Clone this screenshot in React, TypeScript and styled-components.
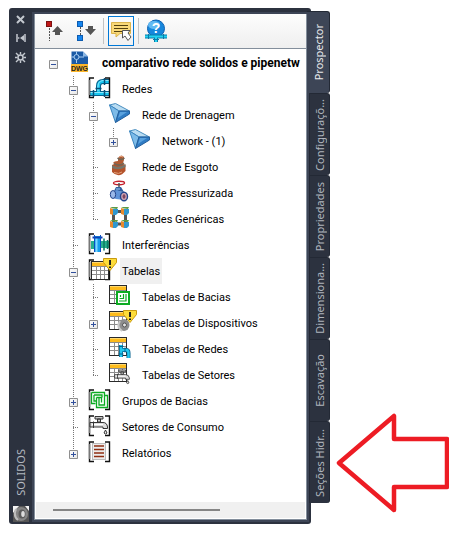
import React from "react";
import styled, { createGlobalStyle, css } from "styled-components";

const GlobalStyle = createGlobalStyle`
  *, *::before, *::after { box-sizing: border-box; }
  body { margin: 0; background: #fff; }
  button { font: inherit; border: 0; padding: 0; background: none; cursor: pointer; }
`;

const dark = "#2c323f";
const slate = "#3d4556";
const edge = "#838e9b";
const uiFont = `"Noto Sans", "Open Sans", sans-serif`;
const treeFont = `Roboto, "Liberation Sans", sans-serif`;

const Page = styled.main`
  display: flex;
  align-items: flex-start;
  min-height: 100vh;
  padding: 8px 12px 15px 9px;
`;

const Palette = styled.section`
  display: flex;
  align-self: stretch;
  flex: 1;
  min-width: 0;
  padding: 4px 2px 2px 0;
  background: ${dark};
  border-radius: 3px;
`;

const TitleBar = styled.header`
  display: flex;
  flex-direction: column;
  align-items: center;
  width: 23px;
  gap: 5px;
  color: #c3c8cf;
`;

const BarButton = styled.button`
  display: grid;
  place-items: center;
  width: 16px;
  height: 14px;
  color: inherit;
`;

const Title = styled.h1`
  margin: auto 0 5px;
  font: 400 11px/16px ${uiFont};
  color: #b3b8c0;
  writing-mode: vertical-rl;
  transform: rotate(180deg);
`;

const Frame = styled.div`
  display: flex;
  flex: 1;
  min-width: 0;
  background: ${slate};
  padding: 2px;
`;

const Content = styled.div`
  display: flex;
  flex-direction: column;
  flex: 1;
  min-width: 0;
  background: #fff;
  border: solid ${edge};
  border-width: 0 1px 1px;
`;

const Toolbar = styled.div`
  display: flex;
  align-items: center;
  gap: 4px;
  padding: 2px 6px;
  border-bottom: 1px solid ${edge};
  background: linear-gradient(#fdfdfd, #efefef);
`;

const ToolGroup = styled.div`
  display: flex;
  gap: 6px;
`;

const ToolButton = styled.button<{ $pressed?: boolean }>`
  display: grid;
  place-items: center;
  width: 26px;
  height: 30px;
  ${(p) => p.$pressed && css`box-shadow: inset 0 0 0 1px #0078d7;`}
`;

const Separator = styled.span`
  width: 1px;
  height: 26px;
  background: #c3c3c3;
`;

const Tree = styled.ul`
  flex: 1;
  margin: 0;
  padding: 1px 0 0 8px;
  overflow: hidden;
  list-style: none;
  font: 400 11px/26px ${treeFont};
  color: #000;
`;

const Row = styled.li`
  display: flex;
  height: 26px;
  white-space: nowrap;
`;

type Line = "none" | "full" | "upper";

const dots = "repeating-linear-gradient(#777 0 1px, transparent 1px 2px)";
const dotsAcross = "repeating-linear-gradient(90deg, #777 0 1px, transparent 1px 2px)";

const Guide = styled.span<{ $line: Line; $stub?: boolean }>`
  display: flex;
  flex: none;
  width: 20px;
  height: 26px;
  padding: 10px 0 0 6px;
  background-image: ${(p) => (p.$line === "none" ? "none" : dots)}, ${(p) => (p.$stub ? dotsAcross : "none")};
  background-size: 1px ${(p) => (p.$line === "upper" ? "14px" : "26px")}, 6px 1px;
  background-position: 10px 0, 10px 13px;
  background-repeat: no-repeat;
`;

const Expander = styled.button`
  display: block;
  width: 9px;
  height: 9px;
  border-radius: 1px;
  background: linear-gradient(135deg, #fff, #e4e4e4);
  box-shadow: inset 0 0 0 1px #8f8f8f;
  svg { display: block; }
`;

const IconSvg = styled.svg`
  flex: none;
  width: 30px;
  height: 26px;
  margin: 0 3px 0 4px;
`;

const Label = styled.span<{ $bold?: boolean; $selected?: boolean }>`
  padding: 1px 2px 0;
  ${(p) => p.$bold && css`font-size: 12px; font-weight: 700; padding-top: 0;`}
  ${(p) => p.$selected && css`background: #f0f0f0;`}
`;

const ScrollTrack = styled.div`
  display: flex;
  align-items: center;
  height: 16px;
  margin: 0 1px 1px;
  padding: 0 17px;
  background: #f0f0f0;
`;

const ScrollThumb = styled.div`
  width: 71%;
  height: 2px;
  background: #858585;
`;

const Tabs = styled.nav`
  display: flex;
  flex: none;
  flex-direction: column;
  width: 21px;
  margin: 3px 0 0 -2px;
`;

const Tab = styled.button<{ $active?: boolean }>`
  display: grid;
  place-items: center;
  height: 82px;
  margin-left: ${(p) => (p.$active ? "-2px" : "0")};
  padding-left: ${(p) => (p.$active ? "2px" : "0")};
  border: solid #232935;
  border-width: ${(p) => (p.$active ? "1px 1px 0 0" : "1px 1px 0 1px")};
  border-radius: 0 3px 3px 0;
  background: ${(p) => (p.$active ? slate : dark)};
  color: ${(p) => (p.$active ? "#e8eaed" : "#b0b5bd")};
`;

const TabText = styled.span`
  font: 400 11px/16px ${uiFont};
  white-space: nowrap;
  writing-mode: vertical-rl;
  transform: rotate(180deg);
`;

const Arrow = styled.svg`
  flex: none;
  width: 114px;
  height: 102px;
  margin: 404px 0 0 5px;
`;

const Brackets = () => (
  <>
    <path d="M7 2H2.500V21.500H7" fill="none" stroke="#111" strokeWidth="1.4" />
    <path d="M2.500 4V19" stroke="#777" strokeWidth="1.4" />
    <path d="M18 2H22.500V21.500H18" fill="none" stroke="#111" strokeWidth="1.4" />
  </>
);

const Grid = () => (
  <g>
    <rect x="2.500" y="1.500" width="17" height="18" fill="#fff" stroke="#2a2a2a" />
    <rect x="3" y="2" width="16" height="4" fill="#fdbb1c" />
    <path d="M3 2.500H19" stroke="#ffd970" />
    <path d="M3 6.500H19M3 10.500H19M3 14.500H19M7.500 7V19M11.500 7V19M15.500 7V19" stroke="#8c8c8c" />
  </g>
);

const Warning = () => (
  <g>
    <path d="M16.500 .500H29.500V4.500L23 12.500L16.500 4.500Z" fill="#fddc3a" stroke="#c99a10" />
    <path d="M23 2V7M23 8.500V10" stroke="#222" strokeWidth="2" />
  </g>
);

const Solid = () => (
  <g strokeLinejoin="round">
    <path d="M2.500 3L8.500 1.500L22.500 9L12 9Z" fill="#b9dcf2" stroke="#4a8fc0" />
    <path d="M2.500 3L12 9L8.500 20.500Z" fill="#7dbbe8" stroke="#3c86c0" />
    <path d="M12 9H22.500V12L8.500 20.500Z" fill="#2f7cc4" stroke="#245f9c" />
    <path d="M13 10L20 10L11 16Z" fill="#5aa2de" />
  </g>
);

const Basins = () => (
  <g fill="none" stroke="#0cab22" strokeWidth="1.300">
    <path d="M3.500 3.500H16.500V6.500M3.500 3.500V14.500H7.500M6 6H14V8.500M6 6V12H8" />
    <path d="M8.500 8.500V18.500H19.500V6.500H16.500V16H11V8.500M8.500 8.500H13.500V13.500" />
  </g>
);

const Tap = () => (
  <g stroke="#333" strokeWidth="1">
    <path d="M8 2.500H16V5H8ZM10.500 5H13.500V8H10.500Z" fill="#ccc" />
    <path d="M3 8.500H16Q20 8.500 20.500 13V14.500H16V13H3Z" fill="#ddd" />
    <path d="M5 10.500H16" stroke="#fff" />
    <path d="M6.500 7.500V14" />
    <path d="M18.500 16L17 19Q18.500 21 20 19Z" fill="#eee" />
  </g>
);

const icons: Record<string, React.ReactNode> = {
  dwg: (
    <g>
      <path d="M4.500 1.500H16L21 6.500V21H4.500Z" fill="#1c5ba6" />
      <path d="M16 1.500L21 6.500H16Z" fill="#8db8e4" />
      <circle cx="9.500" cy="7" r="2.500" fill="none" stroke="#a9cdf0" />
      <path d="M9.500 1.500V4.500M9.500 9.500V13M4.500 7H7M12 7H17" stroke="#a9cdf0" />
      <rect x="4" y="14" width="17" height="8" fill="#fbb62b" />
      <text x="12.500" y="20.500" fontSize="7" fontWeight="700" fontFamily="Liberation Sans, sans-serif" textAnchor="middle" fill="#222">DWG</text>
    </g>
  ),
  pipes: (
    <g>
      <path d="M2 17.500H23" stroke="#075f88" strokeWidth="5" />
      <path d="M11.500 16V10Q11.500 5.500 16 5.500H23" fill="none" stroke="#075f88" strokeWidth="5" />
      <path d="M2 17.500H23" stroke="#18c5ef" strokeWidth="3" />
      <path d="M11.500 17V10Q11.500 5.500 16 5.500H23" fill="none" stroke="#18c5ef" strokeWidth="3" />
      <path d="M3 16.500H22M11 15V10Q11 5 16 4.500H22" fill="none" stroke="#8beaff" />
      <path d="M8.500 12.500H14.500M17.500 2V9M6.500 14V21M17.500 14V21" stroke="#064f78" strokeWidth="1.500" />
      <Brackets />
    </g>
  ),
  solid: <Solid />,
  sewer: (
    <g>
      <path d="M5 17V11Q12 7 18.500 11V17Q12 25 5 18Z" fill="#b4532b" />
      <path d="M5 11Q11 15 18.500 10V13Q12 17 5 14Z" fill="#77756a" />
      <path d="M6 9Q7 7 11 7L11 4Q14 -.500 17 3L17 6L16 9Q12 13 6 9Z" fill="#b05b34" />
      <path d="M7 9.500Q12 13 17 9M10.500 4Q14 7 17.500 4" fill="none" stroke="#6c6658" strokeWidth="1.500" />
      <path d="M7 18.500Q12 20.500 15 18M12 3Q14 1.500 16 3" fill="none" stroke="#e2a27c" />
    </g>
  ),
  valve: (
    <g>
      <ellipse cx="12" cy="3" rx="5.500" ry="1.700" fill="none" stroke="#c4202c" strokeWidth="1.400" />
      <path d="M12 3V8" stroke="#555" strokeWidth="1.500" />
      <path d="M7 11L9 7H14L17 12Z" fill="#315f9e" />
      <path d="M4 12L10 10L19 14L17 20L9 19L4 17Z" fill="#5f93d8" />
      <ellipse cx="6" cy="14.500" rx="2.700" ry="4" fill="#9ab8e8" stroke="#24468c" />
      <ellipse cx="17" cy="16.500" rx="3.500" ry="4.300" fill="#d7a8b5" stroke="#24468c" strokeWidth="1.400" />
      <ellipse cx="17" cy="16.500" rx="1.500" ry="2.200" fill="#7d4660" />
      <path d="M9 9H13" stroke="#a9cdf5" />
    </g>
  ),
  generic: (
    <g>
      <path d="M6.500 5.500H18.500V18H6.500Z" fill="none" stroke="#555" strokeWidth="3" />
      {[[3, 1], [14, 1], [3, 14], [14, 14]].map(([x, y]) => (
        <g key={`${x}-${y}`}>
          <path d={`M${x} ${y + 1}L${x + 2} ${y}H${x + 8}L${x + 7} ${y + 2}Z`} fill="#5c9b45" />
          <path d={`M${x} ${y + 1}L${x + 3} ${y + 2}V${y + 8}L${x} ${y + 7}Z`} fill="#e8892d" />
          <path d={`M${x + 3} ${y + 2}H${x + 8}V${y + 6}L${x + 6} ${y + 8}H${x + 3}Z`} fill="#3097d0" />
        </g>
      ))}
    </g>
  ),
  clash: (
    <g>
      <rect x="4" y="9" width="4" height="8" fill="#27b08d" />
      <path d="M14 9H22V16H14Z" fill="#27b08d" />
      <path d="M17 6.500V18.500M20.500 8V17" stroke="#087a63" strokeWidth="1.500" />
      <path d="M7 4H14V20H7Z" fill="#159dec" />
      <path d="M9.500 5V20" stroke="#7fd7ff" strokeWidth="2" />
      <path d="M5.500 5.500H15.500" stroke="#0a3fb5" strokeWidth="2" />
      <path d="M7.500 3V20M13.500 3V20" stroke="#0a4fc0" />
      <Brackets />
    </g>
  ),
  tables: (
    <g>
      <Brackets />
      <g transform="translate(2 2)"><Grid /></g>
      <Warning />
    </g>
  ),
  tableBasins: (
    <g>
      <Grid />
      <rect x="10" y="8" width="12" height="12" fill="#fff" stroke="#0cab22" strokeWidth="2" />
      <path d="M12 17H19V10M12.500 14.500H16.500V10M13.500 11V13" fill="none" stroke="#0cab22" strokeWidth="1.200" />
    </g>
  ),
  tableDevices: (
    <g>
      <Grid />
      <ellipse cx="17" cy="15" rx="5.500" ry="6" fill="#8d8d8d" />
      <path d="M13 11Q9 17 15 21" fill="none" stroke="#c9c9c9" strokeWidth="2" />
      <circle cx="17.500" cy="15" r="2" fill="#e4e4e4" stroke="#555" />
      <Warning />
    </g>
  ),
  tableNetworks: (
    <g>
      <Grid />
      <path d="M14 9V21M14 14H19Q21.500 14 21.500 17V22" fill="none" stroke="#07628d" strokeWidth="4" />
      <path d="M14 9V21M14 14H19Q21.500 14 21.500 17V22" fill="none" stroke="#20c8ef" strokeWidth="2.500" />
      <path d="M11.500 10.500H16.500M11.500 18H16.500M18 11.500V16.500" stroke="#07628d" />
    </g>
  ),
  tableSectors: (
    <g>
      <Grid />
      <g transform="translate(5 6) scale(.85 .78)"><Tap /></g>
    </g>
  ),
  basins: (
    <g>
      <Brackets />
      <g transform="translate(1 1)"><Basins /></g>
    </g>
  ),
  tap: (
    <g>
      <Brackets />
      <Tap />
    </g>
  ),
  report: (
    <g>
      <Brackets />
      <rect x="5.500" y="3.500" width="13" height="16" fill="#ececec" stroke="#bbb" />
      <path d="M7 6H17M7 9.500H17M7 13H17M7 16.500H17" stroke="#8f2e12" strokeWidth="1.400" />
    </g>
  ),
};

interface Node {
  label: string;
  icon: string;
  guides: Line[];
  state?: "open" | "closed";
  selected?: boolean;
}

const nodes: Node[] = [
  { label: "comparativo rede solidos e pipenetw", icon: "dwg", guides: ["none"], state: "open" },
  { label: "Redes", icon: "pipes", guides: ["none", "full"], state: "open" },
  { label: "Rede de Drenagem", icon: "solid", guides: ["none", "full", "full"], state: "open" },
  { label: "Network - (1)", icon: "solid", guides: ["none", "full", "full", "upper"], state: "closed" },
  { label: "Rede de Esgoto", icon: "sewer", guides: ["none", "full", "full"] },
  { label: "Rede Pressurizada", icon: "valve", guides: ["none", "full", "full"] },
  { label: "Redes Genéricas", icon: "generic", guides: ["none", "full", "upper"] },
  { label: "Interferências", icon: "clash", guides: ["none", "full"] },
  { label: "Tabelas", icon: "tables", guides: ["none", "full"], state: "open", selected: true },
  { label: "Tabelas de Bacias", icon: "tableBasins", guides: ["none", "full", "full"] },
  { label: "Tabelas de Dispositivos", icon: "tableDevices", guides: ["none", "full", "full"], state: "closed" },
  { label: "Tabelas de Redes", icon: "tableNetworks", guides: ["none", "full", "full"] },
  { label: "Tabelas de Setores", icon: "tableSectors", guides: ["none", "full", "upper"] },
  { label: "Grupos de Bacias", icon: "basins", guides: ["none", "full"], state: "closed" },
  { label: "Setores de Consumo", icon: "tap", guides: ["none", "full"] },
  { label: "Relatórios", icon: "report", guides: ["none", "upper"], state: "closed" },
];

const TreeRow = ({ node }: { node: Node }) => {
  const last = node.guides.length - 1;
  return (
    <Row role="treeitem" aria-level={last + 1} aria-selected={!!node.selected}>
      {node.guides.map((line, i) => (
        <Guide key={i} $line={line} $stub={i === last && !node.state}>
          {i === last && node.state && (
            <Expander aria-label={`${node.state === "open" ? "Recolher" : "Expandir"} ${node.label}`}>
              <svg width="9" height="9" viewBox="0 0 9 9">
                <path d={node.state === "open" ? "M2 4.5H7" : "M2 4.5H7M4.5 2V7"} stroke="#31509c" />
              </svg>
            </Expander>
          )}
        </Guide>
      ))}
      <IconSvg viewBox="0 0 30 26" aria-hidden>{icons[node.icon]}</IconSvg>
      <Label $bold={last === 0} $selected={node.selected}>{node.label}</Label>
    </Row>
  );
};

const tabs = ["Prospector", "Configuraçõ...", "Propriedades", "Dimensiona...", "Escavação", "Seções Hidr..."];

export default function App() {
  return (
    <>
      <GlobalStyle />
      <Page>
        <Palette>
          <TitleBar>
            <BarButton aria-label="Fechar">
              <svg width="9" height="9" viewBox="0 0 9 9"><path d="M1 1L8 8M8 1L1 8" stroke="currentColor" strokeWidth="2" /></svg>
            </BarButton>
            <BarButton aria-label="Ocultar automaticamente">
              <svg width="10" height="8" viewBox="0 0 10 8"><path d="M1 0V8M9 0V8" stroke="currentColor" strokeWidth="1.500" /><path d="M2 3L4 4L2 5ZM4 4L8 1V7Z" fill="currentColor" /></svg>
            </BarButton>
            <BarButton aria-label="Propriedades da paleta">
              <svg width="11" height="11" viewBox="0 0 11 11" fill="none" stroke="currentColor">
                <circle cx="5.500" cy="5.500" r="2.500" strokeWidth="1.500" />
                <path d="M5.500 0V2.500M5.500 8.500V11M0 5.500H2.500M8.500 5.500H11M1 1L3.500 3.500M7.500 7.500L10 10M10 1L7.500 3.500M3.500 7.500L1 10" strokeWidth="1.400" />
              </svg>
            </BarButton>
            <Title>SOLIDOS</Title>
            <svg width="16" height="16" viewBox="0 0 16 16" aria-hidden>
              <rect width="16" height="16" fill="#555" />
              <path d="M0 0H6L0 7ZM12 0H16V5Z" fill="#f4f4f4" />
              <ellipse cx="8" cy="8" rx="7" ry="7" fill="#858585" />
              <path d="M3 3Q0 10 5 14" fill="none" stroke="#bdbdbd" strokeWidth="2" />
              <ellipse cx="9" cy="8" rx="3.500" ry="4.500" fill="#5b5b5b" />
              <ellipse cx="10" cy="8" rx="1.800" ry="3" fill="#ddd" />
            </svg>
          </TitleBar>
          <Frame>
            <Content>
              <Toolbar role="toolbar">
                <ToolGroup>
                  <ToolButton aria-label="Recolher tudo">
                    <svg width="18" height="22" viewBox="0 0 18 22">
                      <rect x="1.500" y="1.500" width="5" height="5" fill="#c01818" stroke="#7c1111" />
                      <path d="M4.500 8V21" stroke="#555" strokeDasharray="2 1" />
                      <path d="M12.500 6L18 12H15V15H10V12H7Z" fill="#555" />
                    </svg>
                  </ToolButton>
                  <ToolButton aria-label="Expandir tudo">
                    <svg width="20" height="22" viewBox="0 0 20 22">
                      <path d="M4.500 7V16" stroke="#555" strokeDasharray="2 1" />
                      <rect x="1.500" y="1.500" width="5" height="5" fill="#1686f0" stroke="#0d5cb0" />
                      <rect x="1.500" y="15.500" width="5" height="5" fill="#1686f0" stroke="#0d5cb0" />
                      <path d="M14.500 15L20 9H17V6H12V9H9Z" fill="#555" />
                    </svg>
                  </ToolButton>
                </ToolGroup>
                <Separator />
                <ToolButton $pressed aria-pressed aria-label="Dicas">
                  <svg width="22" height="24" viewBox="0 0 22 24">
                    <path d="M1.500 3.500H20.500V14.500H10L6 18V14.500H1.500Z" fill="#f9d978" stroke="#dcb54d" />
                    <path d="M4 6.500H18M4 9.500H18M4 12.500H12" stroke="#54420f" />
                    <path d="M12.500 11.500H20L18 14L21 18L18 21.500L15 17L12.500 19Z" fill="#fff" stroke="#555" />
                  </svg>
                </ToolButton>
                <Separator />
                <ToolButton aria-label="Ajuda">
                  <svg width="24" height="24" viewBox="0 0 24 24">
                    <circle cx="12" cy="9.500" r="8.500" fill="#1787dc" stroke="#0c61b4" />
                    <ellipse cx="10" cy="6" rx="6" ry="4" fill="#62b9f3" />
                    <text x="12" y="14" textAnchor="middle" fontSize="14" fontWeight="700" fontFamily="Liberation Sans, sans-serif" fill="#fff">?</text>
                    <path d="M1 17.500H23M12 17V23" stroke="#087ca8" strokeWidth="4" />
                    <path d="M1 17.500H23M12 17V23" stroke="#23d2f2" strokeWidth="2" />
                    <path d="M4.500 15V20M19.500 15V20M9 20.500H15" stroke="#087ca8" />
                  </svg>
                </ToolButton>
              </Toolbar>
              <Tree role="tree">
                {nodes.map((node) => <TreeRow key={node.label} node={node} />)}
              </Tree>
              <ScrollTrack><ScrollThumb /></ScrollTrack>
            </Content>
          </Frame>
        </Palette>
        <Tabs role="tablist">
          {tabs.map((tab, i) => (
            <Tab key={tab} role="tab" aria-selected={i === 0} $active={i === 0}>
              <TabText>{tab}</TabText>
            </Tab>
          ))}
        </Tabs>
        <Arrow viewBox="0 0 114 102" aria-hidden>
          <path d="M4 51L59 4V27H112V75H59V98Z" fill="#fff" stroke="#ed1c24" strokeWidth="4.500" strokeLinejoin="round" />
        </Arrow>
      </Page>
    </>
  );
}
